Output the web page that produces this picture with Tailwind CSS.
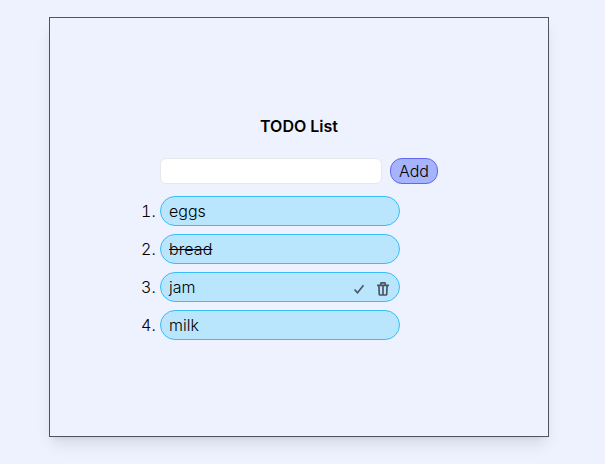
<!DOCTYPE html>
<html lang="en">
<head>
<meta charset="utf-8">
<title>TODO List</title>
<script src="https://cdn.jsdelivr.net/npm/@tailwindcss/browser@4"></script>
</head>
<body class="min-h-screen bg-[#eef2ff] pt-[17px] pl-[49px] font-['Inter',sans-serif] font-light text-black">
<main class="flex h-[420px] w-[500px] flex-col items-center border border-[#4b5563] pt-24 shadow-lg">
  <h1 class="text-base leading-6 font-semibold">TODO List</h1>
  <form class="mt-5 flex gap-2">
    <input class="h-[26px] w-[222px] rounded-md border border-[#e5e7eb] bg-white px-2">
    <button type="button" class="h-[26px] w-12 rounded-xl border border-[#6366f1] bg-[#a5b4fc] text-base leading-6">Add</button>
  </form>
  <ol class="mt-3 mr-[38px] flex w-60 list-outside list-decimal flex-col gap-2">
    <li><div class="flex h-[30px] items-center rounded-2xl border border-[#38bdf8] bg-[#bae6fd] px-2">eggs</div></li>
    <li><div class="flex h-[30px] items-center rounded-2xl border border-[#38bdf8] bg-[#bae6fd] px-2"><span class="tracking-[0.1px] line-through">bread</span></div></li>
    <li><div class="flex h-[30px] items-center rounded-2xl border border-[#38bdf8] bg-[#bae6fd] px-2">jam
      <svg class="mt-1 ml-auto size-4" viewBox="0 0 16 16" fill="none" stroke="#4b5563" stroke-width="1.600"><path d="M3.500 8.500l3 3.300 6-7.600"/></svg>
      <svg class="mt-1 ml-2 size-4" viewBox="0 0 16 16" fill="none" stroke="#4b5563" stroke-width="1.700"><path d="M2 4.300h12M5.800 4V2.400Q5.800 1.800 6.500 1.800h3q.7 0 .7.600V4M3.900 5l.4 8.200q0 .8.800.8h5.800q.8 0 .8-.8L12.100 5M8 5v8.500"/></svg>
    </div></li>
    <li><div class="flex h-[30px] items-center rounded-2xl border border-[#38bdf8] bg-[#bae6fd] px-2">milk</div></li>
  </ol>
</main>
</body>
</html>
